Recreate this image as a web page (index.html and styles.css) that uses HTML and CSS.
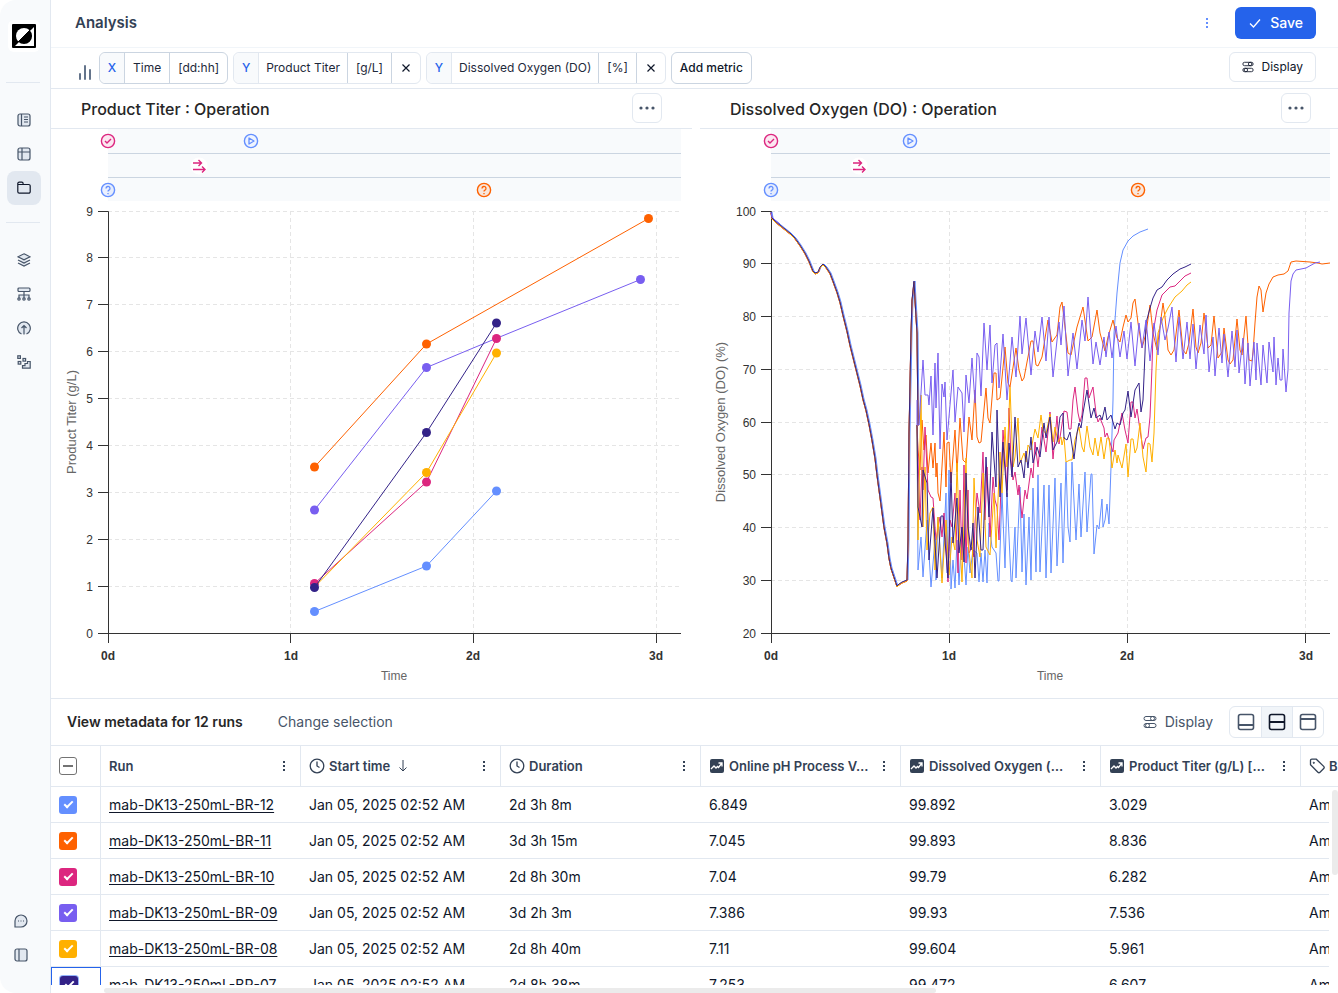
FILE: index.html
```html
<!DOCTYPE html>
<html lang="en">
<head>
  <meta charset="UTF-8">
  <meta name="viewport" content="width=device-width, initial-scale=1.0">
  <title>Analysis</title>
  <link rel="stylesheet" href="styles.css">
</head>
<body>
  <!-- Shared icons -->
  <svg class="sprite" aria-hidden="true">
    <symbol id="i-sliders" viewBox="0 0 14 14">
      <rect x="1" y="1.5" width="12" height="4" rx="2"/><circle cx="9.5" cy="3.5" r="2"/>
      <rect x="1" y="8.5" width="12" height="4" rx="2"/><circle cx="4.5" cy="10.5" r="2"/>
    </symbol>
    <symbol id="i-kebab" viewBox="0 0 4 12">
      <path d="M1 1h2v2H1zM1 5h2v2H1zM1 9h2v2H1z" fill="currentColor" stroke="none"/>
    </symbol>
    <symbol id="i-clock" viewBox="0 0 16 16">
      <circle cx="8" cy="8" r="6.800" stroke-width="1.300"/><path d="M8 3.500V8l2.500 1.500" stroke-width="1.300"/>
    </symbol>
    <symbol id="i-trend" viewBox="0 0 16 16">
      <rect x="1" y="1" width="14" height="14" rx="2" fill="currentColor" stroke="none"/>
      <path d="M2 11l3-3 2 2 1.500-1.500 1 1L13 5M9.500 5H13v3.500" stroke="#fff" stroke-width="1.300"/>
    </symbol>
    <symbol id="i-tag" viewBox="0 0 16 16">
      <path d="M1.500 2.500v4.300l7.400 7.400a1.500 1.500 0 0 0 2.100 0l3.700-3.700a1.500 1.500 0 0 0 0-2.100L7.300 1.200H2.800a1.300 1.300 0 0 0-1.300 1.300z" stroke-width="1.300"/>
      <circle cx="4.800" cy="4.800" r=".6" fill="currentColor"/>
    </symbol>
    <symbol id="e-check" viewBox="-9 -9 18 18">
      <circle r="6.600" fill="#fce7f1" stroke="#dc267f" stroke-width="1.400"/>
      <path d="M-3 0l2 2 4-4" fill="none" stroke="#dc267f" stroke-width="1.400"/>
    </symbol>
    <symbol id="e-play" viewBox="-9 -9 18 18">
      <circle r="6.600" fill="#eff4ff" stroke="#648fff" stroke-width="1.400"/>
      <path d="M-2-3v6l5-3z" fill="none" stroke="#648fff" stroke-width="1.300" stroke-linejoin="round"/>
    </symbol>
    <symbol id="e-arrows" viewBox="-9 -9 18 18">
      <circle r="8.500" fill="#fff" stroke="none"/>
      <path d="M-6-3h8M-.5-6l3 3-3 3M-6 3.500H6M3 .5l3 3-3 3" fill="none" stroke="#dc267f" stroke-width="1.400"/>
    </symbol>
    <symbol id="e-ask" viewBox="-9 -9 18 18">
      <circle r="6.600" fill="currentColor" fill-opacity=".12" stroke="currentColor" stroke-width="1.400"/>
      <path d="M-2-1.500a2 2 0 1 1 3 1.700q-1 .5-1 1.300M0 3v1.200" fill="none" stroke="currentColor" stroke-width="1.300"/>
    </symbol>
  </svg>

  <div class="app">
    <nav class="sidebar">
      <div class="logo">
        <svg width="24" height="24" viewBox="0 0 24 24">
          <rect width="24" height="24" rx="1"/>
          <path d="M22 3v19H3z" fill="#fff"/>
          <circle cx="12" cy="12" r="8" fill="#fff"/>
          <path d="M6.300 17.700A8 8 0 0 0 17.700 6.300z"/>
          <path d="M1 23L23 1" stroke="#000" stroke-width="1"/>
        </svg>
      </div>
      <hr>
      <div class="nav-group">
        <button aria-label="Notebook"><svg viewBox="0 0 14 14"><rect x="1" y="1" width="12" height="12" rx="2"/><path d="M4.500 1v12M7 4h4M7 6.500h4M7 9h4"/></svg></button>
        <button aria-label="Tables"><svg viewBox="0 0 14 14"><rect x="1" y="1" width="12" height="12" rx="2"/><path d="M5 1v12M1 5h12"/></svg></button>
        <button class="active" aria-label="Projects"><svg viewBox="0 0 14 14"><path d="M.8 4.500V2.500a1.300 1.300 0 0 1 1.300-1.300h2.700a1.300 1.300 0 0 1 1.300 1.300v1h5.600a1.500 1.500 0 0 1 1.500 1.500v5.700a1.500 1.500 0 0 1-1.500 1.500H2.300a1.500 1.500 0 0 1-1.500-1.500zM.8 3.500h5.500"/></svg></button>
      </div>
      <hr>
      <div class="nav-group">
        <button aria-label="Layers"><svg viewBox="0 0 14 14"><path d="M7 .8l6 3-6 3-6-3zM1 7l6 3 6-3M1 10l6 3 6-3"/></svg></button>
        <button aria-label="Hierarchy"><svg viewBox="0 0 14 14"><rect x="1" y="1" width="12" height="3.500" rx="1"/><path d="M7 4.500V11M2 11V8h10v3"/><circle cx="2" cy="12" r="1.200"/><circle cx="7" cy="12" r="1.200"/><circle cx="12" cy="12" r="1.200"/></svg></button>
        <button aria-label="Uploads"><svg viewBox="0 0 14 14"><path d="M4.500 13a6.300 6.300 0 1 1 5 0M7 13.500V4.500M4.500 7L7 4.500 9.500 7"/></svg></button>
        <button aria-label="Steps"><svg viewBox="0 0 14 14"><rect x=".8" y=".8" width="2.600" height="2.600"/><rect x="1.200" y="6.500" width="2.600" height="2.600"/><rect x="6" y="3.500" width="2.600" height="2.600"/><path d="M5.500 13.200v-2.500h2.500V8.500h2.500V6.500h2.700v6.700z"/></svg></button>
      </div>
      <div class="nav-group nav-bottom">
        <button aria-label="Chat"><svg viewBox="0 0 14 14"><path d="M1 13V7a6 6 0 1 1 6 6z"/><path d="M4 7h1M6.500 7h1M9 7h1"/></svg></button>
        <button aria-label="Toggle sidebar"><svg viewBox="0 0 14 14"><rect x="1" y="1" width="12" height="12" rx="2"/><path d="M5 1v12"/></svg></button>
      </div>
    </nav>

    <main class="main">
      <header class="topbar">
        <h1>Analysis</h1>
        <button class="kebab kebab-blue" aria-label="More"><svg><use href="#i-kebab"/></svg></button>
        <button class="save"><svg viewBox="0 0 14 14"><path d="M2 7.500l3.500 3.500L12 3.500"/></svg>Save</button>
      </header>

      <div class="toolbar">
        <svg class="bars" viewBox="0 0 16 18"><path d="M3 11v5M8 3v13M13 7v9"/></svg>
        <div class="chip chip-x">
          <span class="axis">X</span><button>Time</button><button>[dd:hh]</button>
        </div>
        <div class="chip">
          <span class="axis">Y</span><button>Product Titer</button><button class="unit">[g/L]</button><button class="remove" aria-label="Remove"><svg viewBox="0 0 8 8"><path d="M.5.5l7 7M7.500.5l-7 7"/></svg></button>
        </div>
        <div class="chip">
          <span class="axis">Y</span><button>Dissolved Oxygen (DO)</button><button class="unit">[%]</button><button class="remove" aria-label="Remove"><svg viewBox="0 0 8 8"><path d="M.5.5l7 7M7.500.5l-7 7"/></svg></button>
        </div>
        <button class="add">Add metric</button>
        <button class="display"><svg><use href="#i-sliders"/></svg>Display</button>
      </div>

      <div class="charts">
        <section class="chart">
          <header>
            <h2>Product Titer : Operation</h2>
            <button class="more" aria-label="Chart options"><svg viewBox="0 0 16 4"><circle cx="2" cy="2" r="1.600"/><circle cx="8" cy="2" r="1.600"/><circle cx="14" cy="2" r="1.600"/></svg></button>
          </header>
          <svg class="plot" viewBox="51 129 641 569">
            <rect class="lane" x="108" y="129" width="573" height="72"/>
            <path class="lane-line" d="M108 153.500H681M108 177.500H681"/>
            <path class="grid" d="M108 211.500H681M108 257.500H681M108 304.500H681M108 351.500H681M108 398.500H681M108 445.500H681M108 492.500H681M108 539.500H681M108 586.500H681M290.500 211V633M473.500 211V633M656.500 211V633"/>
            <path class="axis-line" d="M98 211.500H108.500V643M98 257.500h10M98 304.500h10M98 351.500h10M98 398.500h10M98 445.500h10M98 492.500h10M98 539.500h10M98 586.500h10M98 633.500H681M290.500 633v10M473.500 633v10M656.500 633v10"/>
            <g class="y-ticks">
              <text x="93" y="216">9</text><text x="93" y="262">8</text><text x="93" y="309">7</text><text x="93" y="356">6</text><text x="93" y="403">5</text><text x="93" y="450">4</text><text x="93" y="497">3</text><text x="93" y="544">2</text><text x="93" y="591">1</text><text x="93" y="638">0</text>
            </g>
            <g class="x-ticks">
              <text x="108" y="660">0d</text><text x="291" y="660">1d</text><text x="473" y="660">2d</text><text x="656" y="660">3d</text>
            </g>
            <text class="title" x="394" y="680">Time</text>
            <text class="title y-title" transform="translate(76 422) rotate(-90)">Product Titer (g/L)</text>

            <g class="series blue"><path d="M314.500 611.500L426.500 566 496.500 491"/><circle cx="314.500" cy="611.500" r="4.500"/><circle cx="426.500" cy="566" r="4.500"/><circle cx="496.500" cy="491" r="4.500"/></g>
            <g class="series orange"><path d="M314.500 467L426.500 344 648.500 218.500"/><circle cx="314.500" cy="467" r="4.500"/><circle cx="426.500" cy="344" r="4.500"/><circle cx="648.500" cy="218.500" r="4.500"/></g>
            <g class="series purple"><path d="M314.500 510L426.500 367.500 496 338.500 640.500 279.500"/><circle cx="314.500" cy="510" r="4.500"/><circle cx="426.500" cy="367.500" r="4.500"/><circle cx="640.500" cy="279.500" r="4.500"/></g>
            <g class="series pink"><path d="M314.500 583.500L426.500 482 496.500 338.500"/><circle cx="314.500" cy="583.500" r="4.500"/><circle cx="426.500" cy="482" r="4.500"/><circle cx="496.500" cy="338.500" r="4.500"/></g>
            <g class="series yellow"><path d="M314.500 587L426.500 472.500 496.500 353"/><circle cx="426.500" cy="472.500" r="4.500"/><circle cx="496.500" cy="353" r="4.500"/></g>
            <g class="series indigo"><path d="M314.500 587.500L426.500 432.500 496.500 323"/><circle cx="314.500" cy="587.500" r="4.500"/><circle cx="426.500" cy="432.500" r="4.500"/><circle cx="496.500" cy="323" r="4.500"/></g>

            <use href="#e-check" x="99" y="132" width="18" height="18"/>
            <use href="#e-play" x="242" y="132" width="18" height="18"/>
            <use href="#e-arrows" x="190" y="157" width="18" height="18"/>
            <use class="ask-blue" href="#e-ask" x="99" y="181" width="18" height="18"/>
            <use class="ask-orange" href="#e-ask" x="475" y="181" width="18" height="18"/>
          </svg>
        </section>

        <section class="chart">
          <header>
            <h2>Dissolved Oxygen (DO) : Operation</h2>
            <button class="more" aria-label="Chart options"><svg viewBox="0 0 16 4"><circle cx="2" cy="2" r="1.600"/><circle cx="8" cy="2" r="1.600"/><circle cx="14" cy="2" r="1.600"/></svg></button>
          </header>
          <svg class="plot" viewBox="700 129 641 569">
            <rect class="lane" x="771" y="129" width="559" height="72"/>
            <path class="lane-line" d="M771 153.500H1330M771 177.500H1330"/>
            <path class="grid" d="M771 211.500H1330M771 263.500H1330M771 316.500H1330M771 369.500H1330M771 422.500H1330M771 474.500H1330M771 527.500H1330M771 580.500H1330M949.500 211V633M1127.500 211V633M1305.500 211V633"/>
            <path class="axis-line" d="M761 211.500H771.500V643M761 263.500h10M761 316.500h10M761 369.500h10M761 422.500h10M761 474.500h10M761 527.500h10M761 580.500h10M761 633.500H1330M949.500 633v10M1127.500 633v10M1305.500 633v10"/>
            <g class="y-ticks">
              <text x="756" y="216">100</text><text x="756" y="268">90</text><text x="756" y="321">80</text><text x="756" y="374">70</text><text x="756" y="427">60</text><text x="756" y="479">50</text><text x="756" y="532">40</text><text x="756" y="585">30</text><text x="756" y="638">20</text>
            </g>
            <g class="x-ticks">
              <text x="771" y="660">0d</text><text x="949" y="660">1d</text><text x="1127" y="660">2d</text><text x="1306" y="660">3d</text>
            </g>
            <text class="title" x="1050" y="680">Time</text>
            <text class="title y-title" transform="translate(725 422) rotate(-90)">Dissolved Oxygen (DO) (%)</text>

            <!-- All runs share the first part of the curve -->
            <defs>
              <path id="descent" d="M771 212L772 218 775 221 780 225 785 229 790 233 795 238 800 245 805 253 809 261 813 271 815 273 818 272 820 267 823 264 826 267 830 273 833 281 837 292 840 302 843 315 847 331 850 345 853 357 856 369 860 385 863 399 866 410 869 424 872 440 875 458 877 475 880 497 882 512 884 527 887 543 889 558 891 568 894 577 897 586 899 584 902 582 907 580 908 540 909 433 911 333 912 300 914 281 915 300 917 333 918 425"/>
            </defs>
            <g class="series blue">
              <use href="#descent" x="1"/>
              <path d="M917 425L918 570 921 537 923 577 927 520 931 587 935 540 936 580 938 517 942 578 946 493 947 573 949 470 951 589 953 560 955 588 957 540 959 585 962 527 966 585 968 547 970 573 973 550 977 553 979 582 981 553 983 582 985 550 987 583 989 523 992 547 996 553 998 581 999 581 1002 493 1005 568 1007 493 1011 580 1012 582 1015 527 1016 578 1020 487 1022 572 1024 514 1026 585 1029 517 1031 580 1033 488 1036 572 1038 475 1040 572 1044 485 1046 578 1049 485 1051 573 1055 478 1057 566 1061 483 1063 563 1066 462 1068 527 1070 542 1072 462 1076 540 1079 484 1081 537 1085 472 1087 532 1091 474 1092 474 1094 554 1097 525 1099 529 1102 499 1103 527 1105 520 1107 504 1109 524 1111 467 1113 400 1114 333 1117 293 1120 263 1123 250 1128 241 1133 236 1140 232 1148 229"/>
            </g>
            <g class="series orange">
              <use href="#descent" y="1"/>
              <path d="M917 425L918 450 920 470 922 420 924 450 926 435 928 473 931 443 933 468 935 443 936 477 937 463 938 493 940 501 944 432 946 487 947 443 949 442 951 483 955 430 957 472 960 418 963 460 966 463 969 417 972 440 975 390 977 437 979 443 981 442 986 388 988 418 990 423 994 373 996 373 997 400 1000 398 1005 347 1008 383 1010 387 1016 348 1019 370 1022 381 1024 378 1031 341 1033 341 1036 365 1038 366 1042 357 1048 320 1052 342 1057 335 1060 307 1062 302 1065 327 1068 353 1071 355 1077 327 1083 307 1088 341 1092 337 1097 310 1100 333 1105 351 1108 337 1113 320 1117 338 1120 342 1123 327 1126 315 1128 322 1131 318 1133 303 1135 299 1138 323 1142 348 1146 333 1150 305 1153 333 1157 350 1163 303 1165 317 1168 350 1171 355 1174 350 1179 310 1183 350 1186 354 1189 343 1193 309 1196 347 1198 353 1201 343 1204 313 1208 348 1211 345 1214 316 1218 358 1222 352 1224 328 1228 360 1230 364 1233 360 1237 319 1240 350 1242 355 1246 316 1249 360 1252 361 1253 352 1255 323 1257 297 1259 286 1261 290 1263 312 1266 293 1269 284 1273 277 1278 275 1284 274 1288 271 1291 262 1296 261 1310 262 1318 263 1322 264 1330 263"/>
            </g>
            <g class="series pink">
              <use href="#descent" y="1"/>
              <path d="M917 425L920 520 922 467 923 490 925 427 928 490 931 497 933 498 935 527 936 540 940 517 942 537 944 513 946 547 948 582 950 520 952 527 955 493 957 547 958 573 960 490 962 560 964 465 966 563 968 490 969 553 972 547 974 557 975 523 977 493 980 513 983 452 985 520 987 467 990 537 993 477 995 500 997 507 999 540 1001 487 1003 430 1005 460 1007 490 1009 408 1011 460 1013 480 1015 472 1018 495 1019 485 1022 518 1025 490 1027 499 1031 468 1033 478 1035 442 1038 467 1042 427 1046 452 1050 412 1053 459 1057 416 1059 444 1064 411 1067 412 1069 429 1071 429 1073 400 1075 387 1078 413 1080 422 1082 415 1085 378 1087 378 1089 398 1093 387 1096 413 1098 422 1100 418 1104 428 1105 437 1107 433 1113 452 1114 440 1118 433 1122 413 1125 430 1128 443 1131 402 1133 402 1135 418 1137 409 1140 430 1143 449 1146 438 1148 437 1150 417 1152 367 1153 333 1157 310 1162 295 1170 287 1175 286 1180 281 1185 276 1191 273"/>
            </g>
            <g class="series yellow">
              <use href="#descent" y="1"/>
              <path d="M917 425L918 540 921 395 923 527 925 467 927 550 930 513 933 507 935 570 938 517 942 583 946 520 949 575 952 537 955 550 957 463 959 523 962 582 966 458 968 543 972 578 974 478 977 540 980 557 983 473 986 547 990 555 994 493 996 548 1000 452 1002 493 1005 427 1007 467 1010 387 1013 467 1015 457 1018 418 1020 463 1024 453 1026 462 1028 445 1031 450 1035 429 1038 438 1041 415 1043 430 1046 434 1050 414 1053 442 1055 427 1058 442 1061 437 1062 445 1064 437 1066 462 1070 460 1072 460 1075 440 1079 427 1082 447 1084 452 1087 426 1090 447 1093 455 1095 438 1098 456 1101 437 1104 459 1107 438 1109 438 1112 468 1115 450 1117 463 1118 455 1122 468 1126 444 1128 477 1131 439 1133 439 1135 453 1137 448 1140 423 1143 457 1146 472 1148 443 1150 444 1152 462 1154 433 1156 370 1158 333 1163 318 1168 308 1175 297 1182 291 1187 285 1191 282"/>
            </g>
            <g class="series indigo">
              <use href="#descent"/>
              <path d="M917 425L918 507 922 527 923 470 927 483 929 560 933 508 937 578 941 516 943 516 948 578 951 472 953 543 957 498 959 553 962 527 964 562 966 473 968 527 971 550 973 523 975 578 978 507 981 550 983 550 986 457 989 517 992 432 996 487 997 410 1000 497 1003 442 1007 497 1009 443 1012 477 1015 417 1018 467 1021 460 1024 478 1026 451 1028 468 1031 437 1033 463 1037 447 1040 457 1044 423 1046 438 1050 417 1053 450 1057 442 1060 417 1063 413 1064 438 1067 440 1070 432 1074 459 1077 433 1079 423 1081 428 1083 413 1087 390 1091 418 1094 408 1096 418 1100 415 1102 420 1105 407 1107 420 1111 415 1115 429 1117 423 1120 425 1123 413 1125 410 1128 391 1131 417 1135 390 1139 383 1141 412 1143 400 1145 353 1146 323 1150 308 1153 298 1157 290 1162 287 1167 280 1173 274 1180 269 1185 267 1191 264"/>
            </g>
            <g class="series purple">
              <path d="M771 212L772 217 775 220 780 224M917 400L917 425 919 425 923 360 925 395 928 395 929 405 931 376 933 435 935 363 936 408 938 353 940 449 942 384 944 397 945 382 947 440 953 370 955 422 958 387 962 393 964 432 966 375 969 403 972 358 975 403 977 353 979 357 981 396 984 323 987 370 990 325 992 383 995 345 997 343 999 388 1003 334 1007 400 1012 337 1016 377 1020 316 1022 354 1026 318 1031 375 1035 331 1038 352 1042 317 1046 361 1049 317 1053 377 1059 322 1061 345 1064 306 1068 376 1073 333 1077 369 1082 320 1085 341 1088 297 1093 364 1096 342 1100 365 1104 337 1106 357 1109 332 1112 358 1116 326 1120 357 1124 331 1127 359 1131 322 1135 366 1139 323 1142 348 1146 320 1150 361 1154 323 1158 355 1161 317 1165 340 1168 328 1172 307 1176 362 1179 317 1183 359 1187 322 1190 359 1193 324 1196 369 1200 325 1204 354 1206 315 1209 372 1213 337 1215 376 1219 328 1222 363 1224 334 1228 377 1232 331 1235 367 1237 330 1239 373 1243 338 1245 384 1248 343 1250 386 1254 342 1256 380 1257 343 1261 385 1263 345 1267 383 1269 342 1273 372 1274 337 1276 385 1278 358 1280 380 1282 380 1283 349 1286 392 1288 370 1289 313 1291 281 1293 274 1296 270 1306 268 1315 263 1320 262"/>
            </g>

            <use href="#e-check" x="762" y="132" width="18" height="18"/>
            <use href="#e-play" x="901" y="132" width="18" height="18"/>
            <use href="#e-arrows" x="850" y="157" width="18" height="18"/>
            <use class="ask-blue" href="#e-ask" x="762" y="181" width="18" height="18"/>
            <use class="ask-orange" href="#e-ask" x="1129" y="181" width="18" height="18"/>
          </svg>
        </section>
      </div>

      <section class="runs">
        <div class="runs-bar">
          <h3>View metadata for 12 runs</h3>
          <button class="plain">Change selection</button>
          <button class="plain display-runs"><svg><use href="#i-sliders"/></svg>Display</button>
          <div class="layouts">
            <button aria-label="Table bottom"><svg viewBox="0 0 18 18"><rect x="1.500" y="1.500" width="15" height="15" rx="2"/><path d="M1.500 12h15"/></svg></button>
            <button class="on" aria-label="Split"><svg viewBox="0 0 18 18"><rect x="1.500" y="1.500" width="15" height="15" rx="2"/><path d="M1.500 9h15"/></svg></button>
            <button aria-label="Table top"><svg viewBox="0 0 18 18"><rect x="1.500" y="1.500" width="15" height="15" rx="2"/><path d="M1.500 6h15"/></svg></button>
          </div>
        </div>

        <div class="table-wrap">
          <table>
            <thead>
              <tr>
                <th class="pick"><input type="checkbox" class="some" aria-label="Select all runs"></th>
                <th><div class="head">Run<button class="kebab" aria-label="Run menu"><svg><use href="#i-kebab"/></svg></button></div></th>
                <th><div class="head"><svg class="icon"><use href="#i-clock"/></svg>Start time<svg class="sort" viewBox="0 0 10 14"><path d="M5 1v11M1.500 8.500L5 12l3.500-3.500"/></svg><button class="kebab" aria-label="Start time menu"><svg><use href="#i-kebab"/></svg></button></div></th>
                <th><div class="head"><svg class="icon"><use href="#i-clock"/></svg>Duration<button class="kebab" aria-label="Duration menu"><svg><use href="#i-kebab"/></svg></button></div></th>
                <th><div class="head"><svg class="icon"><use href="#i-trend"/></svg>Online pH Process V…<button class="kebab" aria-label="pH menu"><svg><use href="#i-kebab"/></svg></button></div></th>
                <th><div class="head"><svg class="icon"><use href="#i-trend"/></svg>Dissolved Oxygen (…<button class="kebab" aria-label="Oxygen menu"><svg><use href="#i-kebab"/></svg></button></div></th>
                <th><div class="head"><svg class="icon"><use href="#i-trend"/></svg>Product Titer (g/L) […<button class="kebab" aria-label="Titer menu"><svg><use href="#i-kebab"/></svg></button></div></th>
                <th><div class="head"><svg class="icon"><use href="#i-tag"/></svg>B</div></th>
              </tr>
            </thead>
            <tbody>
              <tr><td class="pick"><input type="checkbox" class="blue" aria-label="BR-12" checked></td><td><a href="#">mab-DK13-250mL-BR-12</a></td><td>Jan 05, 2025 02:52 AM</td><td>2d 3h 8m</td><td>6.849</td><td>99.892</td><td>3.029</td><td>Am</td></tr>
              <tr><td class="pick"><input type="checkbox" class="orange" aria-label="BR-11" checked></td><td><a href="#">mab-DK13-250mL-BR-11</a></td><td>Jan 05, 2025 02:52 AM</td><td>3d 3h 15m</td><td>7.045</td><td>99.893</td><td>8.836</td><td>Am</td></tr>
              <tr><td class="pick"><input type="checkbox" class="pink" aria-label="BR-10" checked></td><td><a href="#">mab-DK13-250mL-BR-10</a></td><td>Jan 05, 2025 02:52 AM</td><td>2d 8h 30m</td><td>7.04</td><td>99.79</td><td>6.282</td><td>Am</td></tr>
              <tr><td class="pick"><input type="checkbox" class="purple" aria-label="BR-09" checked></td><td><a href="#">mab-DK13-250mL-BR-09</a></td><td>Jan 05, 2025 02:52 AM</td><td>3d 2h 3m</td><td>7.386</td><td>99.93</td><td>7.536</td><td>Am</td></tr>
              <tr><td class="pick"><input type="checkbox" class="yellow" aria-label="BR-08" checked></td><td><a href="#">mab-DK13-250mL-BR-08</a></td><td>Jan 05, 2025 02:52 AM</td><td>2d 8h 40m</td><td>7.11</td><td>99.604</td><td>5.961</td><td>Am</td></tr>
              <tr class="focused"><td class="pick"><input type="checkbox" class="indigo" aria-label="BR-07" checked></td><td><a href="#">mab-DK13-250mL-BR-07</a></td><td>Jan 05, 2025 02:52 AM</td><td>2d 8h 38m</td><td>7.253</td><td>99.472</td><td>6.607</td><td>Am</td></tr>
            </tbody>
          </table>
          <div class="vbar"><span></span></div>
          <div class="hbar"><span></span></div>
        </div>
      </section>
    </main>
  </div>
</body>
</html>
```
FILE: styles.css
```css
* {
  box-sizing: border-box;
}

body {
  margin: 0;
  font-family: Inter, "Liberation Sans", sans-serif;
  font-size: 14px;
  color: #0f172a;
  background: #fff;
}

button {
  font: inherit;
  color: inherit;
  background: none;
  border: none;
  padding: 0;
  cursor: pointer;
}

svg {
  fill: none;
  stroke: currentColor;
  flex: none;
}

h1, h2, h3 {
  margin: 0;
}

.sprite {
  display: none;
}

.app {
  display: flex;
  height: 100vh;
  overflow: hidden;
}

/* Sidebar */
.sidebar {
  width: 51px;
  flex: none;
  display: flex;
  flex-direction: column;
  padding: 20px 0 21px;
  background: #f8fafc;
  border-right: 1px solid #e2e8f0;
  border-radius: 16px 0 0 16px;
  color: #475569;
}

.logo {
  width: 32px;
  height: 32px;
  margin-left: 8px;
  padding: 4px;
  background: #fff;
  border-radius: 6px;
}

.logo svg {
  display: block;
  fill: #000;
  stroke: none;
}

.sidebar hr {
  width: 34px;
  height: 1px;
  margin: 30px 0 20px 6px;
  border: none;
  background: #e2e8f0;
}

.nav-group {
  display: flex;
  flex-direction: column;
  padding-left: 7px;
}

.nav-group + hr {
  margin-top: 17px;
}

.nav-group button {
  width: 34px;
  height: 34px;
  display: flex;
  align-items: center;
  justify-content: center;
  border-radius: 8px;
}

.nav-group svg {
  width: 14px;
  height: 14px;
  fill: #e2e8f0;
  stroke-width: 1.2;
}

.nav-group .active {
  background: #e2e8f0;
  color: #0f172a;
}

.nav-bottom {
  margin-top: auto;
  padding-left: 4px;
}

/* Top bars */
.main {
  flex: 1;
  min-width: 0;
  display: flex;
  flex-direction: column;
  overflow: hidden;
}

.topbar {
  display: flex;
  align-items: center;
  height: 48px;
  flex: none;
  padding: 0 22px 2px 24px;
  border-bottom: 1px solid #f1f5f9;
}

h1 {
  font-size: 15px;
  line-height: 20px;
  font-weight: 600;
  color: #334155;
  margin-right: auto;
}

.kebab {
  display: flex;
  justify-content: center;
  width: 16px;
  color: #334155;
}

.kebab svg {
  width: 4px;
  height: 12px;
}

.kebab-blue {
  color: #648fff;
  margin-right: 20px;
}

.save {
  display: flex;
  align-items: center;
  gap: 8px;
  height: 32px;
  padding: 0 13px;
  border-radius: 6px;
  background: #2563eb;
  color: #fff;
  font-weight: 500;
}

.save svg {
  width: 14px;
  height: 14px;
  stroke-width: 1.3;
}

.toolbar {
  display: flex;
  align-items: center;
  gap: 5px;
  height: 41px;
  flex: none;
  padding: 0 22px 0 26px;
  border-bottom: 1px solid #e2e8f0;
  font-size: 12px;
  line-height: 16px;
}

.bars {
  width: 16px;
  height: 18px;
  margin: 8px 1px 0 0;
  color: #64748b;
  stroke-width: 2;
  stroke-linecap: round;
}

.chip {
  display: flex;
  height: 32px;
  border: 1px solid #e2e8f0;
  border-radius: 6px;
  color: #1e293b;
}

.chip-x {
  border-color: #cbd5e1;
}

.chip button {
  padding: 0 7px 1px;
  border-left: 1px solid #e2e8f0;
}

.chip-x button {
  padding: 0 8px 1px;
  border-left-color: #cbd5e1;
}

.chip .axis {
  width: 24px;
  line-height: 29px;
  text-align: center;
  font-weight: 500;
  color: #2563eb;
  background: #f8fafc;
  border-radius: 6px 0 0 6px;
}

.chip .unit {
  padding: 0 8px 1px;
  border-left: 1px solid #cbd5e1;
  border-right: 1px solid #cbd5e1;
}

.chip .remove {
  width: 28px;
  padding: 0;
  border: none;
  color: #0f172a;
}

.remove svg {
  width: 8px;
  height: 8px;
  stroke-width: 1.2;
}

.add {
  height: 32px;
  padding: 0 8px 1px;
  border: 1px solid #cbd5e1;
  border-radius: 6px;
  font-weight: 500;
}

.display {
  display: flex;
  align-items: center;
  gap: 8px;
  height: 30px;
  margin: 0 0 2px auto;
  padding: 0 12px 1px;
  border: 1px solid #e2e8f0;
  border-radius: 6px;
}

.display svg {
  width: 12px;
  height: 12px;
}

/* Charts */
.charts {
  display: grid;
  grid-template-columns: 1fr 1fr;
  gap: 8px;
  margin-right: -3px;
  flex: none;
}

.chart {
  min-width: 0;
}

.chart header {
  display: flex;
  align-items: center;
  justify-content: space-between;
  height: 40px;
  padding: 0 30px;
  border-bottom: 1px solid #e2e8f0;
}

h2 {
  font-size: 16px;
  font-weight: 500;
  color: #262626;
}

.more {
  width: 30px;
  height: 30px;
  margin-bottom: 1px;
  border: 1px solid #e2e8f0;
  border-radius: 6px;
  color: #475569;
}

.more svg {
  width: 16px;
  height: 4px;
  display: block;
  margin: 0 auto;
  fill: currentColor;
  stroke: none;
}

.plot {
  display: block;
  width: 100%;
  font-family: "Liberation Sans", Arial, sans-serif;
  font-size: 12px;
}

.lane {
  fill: #f8fafc;
  stroke: none;
}

.lane-line {
  stroke: #cbd5e1;
}

.grid {
  stroke: #e5e5e5;
  stroke-dasharray: 4 3;
}

.axis-line {
  stroke: #333;
}

.plot text {
  fill: #333;
  stroke: none;
}

.y-ticks {
  text-anchor: end;
}

.x-ticks {
  text-anchor: middle;
  font-weight: 700;
}

.plot .title {
  fill: #666;
  text-anchor: middle;
}

.y-title {
  font-size: 13px;
}

.series circle {
  fill: var(--run);
  stroke: none;
}

.series {
  stroke: var(--run);
}

.ask-blue {
  color: #648fff;
}

.ask-orange {
  color: #fe6100;
}

/* Run colours */
.blue { --run: #648fff; }
.orange { --run: #fe6100; }
.pink { --run: #dc267f; }
.purple { --run: #785ef0; }
.yellow { --run: #ffb000; }
.indigo { --run: #332288; }

/* Runs table */
.runs {
  flex: 1;
  min-height: 200px;
  display: flex;
  flex-direction: column;
  border-top: 1px solid #e2e8f0;
}

.runs-bar {
  display: flex;
  align-items: center;
  height: 47px;
  flex: none;
  padding: 0 14px 0 16px;
  border-bottom: 1px solid #e2e8f0;
  line-height: 20px;
}

h3 {
  font-size: 14px;
  font-weight: 600;
  color: #262626;
  margin-right: 35px;
}

.plain {
  display: flex;
  align-items: center;
  gap: 8px;
  color: #475569;
}

.display-runs {
  margin-left: auto;
}

.plain svg {
  width: 14px;
  height: 14px;
}

.layouts {
  display: flex;
  height: 32px;
  margin-left: 16px;
  border: 1px solid #e2e8f0;
  border-radius: 6px;
  overflow: hidden;
  color: #475569;
}

.layouts button {
  display: flex;
  align-items: center;
  justify-content: center;
  width: 31px;
}

.layouts button + button {
  border-left: 1px solid #e2e8f0;
}

.layouts svg {
  width: 18px;
  height: 18px;
  stroke-width: 1.6;
}

.layouts path {
  stroke-width: 2;
}

.layouts .on {
  background: #f1f5f9;
  color: #0f172a;
}

.table-wrap {
  position: relative;
  flex: 1;
  overflow: hidden;
}

table {
  width: 1450px;
  table-layout: fixed;
  border-spacing: 0;
}

th, td {
  padding: 0 8px;
  border-bottom: 1px solid #e2e8f0;
  text-align: left;
  white-space: nowrap;
}

th {
  height: 41px;
  border-right: 1px solid #e2e8f0;
  font-size: 13px;
  font-weight: 600;
  line-height: 20px;
  color: #334155;
}

td {
  height: 36px;
}

.pick {
  width: 50px;
  border-right: 1px solid #e2e8f0;
}

.head {
  display: flex;
  align-items: center;
}

.head .icon {
  width: 16px;
  height: 16px;
  margin-right: 4px;
}

.head .sort {
  width: 10px;
  height: 14px;
  margin-left: 8px;
}

.head .kebab {
  margin-left: auto;
}

td a {
  color: inherit;
  text-underline-offset: 2px;
}

input[type="checkbox"] {
  appearance: none;
  display: flex;
  align-items: center;
  justify-content: center;
  width: 18px;
  height: 18px;
  margin: 0;
  border-radius: 3px;
  background: var(--run);
}

input[type="checkbox"]:checked::after {
  content: "";
  width: 7px;
  height: 3px;
  margin-bottom: 3px;
  border: solid #fff;
  border-width: 0 0 2px 2px;
  transform: rotate(-45deg);
}

input.some {
  border: 1px solid #737373;
}

input.some::after {
  content: "";
  width: 10px;
  height: 2px;
  background: #737373;
}

.focused .pick {
  border: 1px solid #2563eb;
}

.focused input {
  box-shadow: 0 0 0 1px #93b4fb;
}

/* Scrollbars over the table body */
.vbar {
  position: absolute;
  top: 41px;
  right: 0;
  bottom: 0;
  width: 9px;
  padding: 3px 0 0 3px;
  background: #fff;
}

.vbar span {
  display: block;
  height: 85px;
  border-radius: 3px;
  background: #ebebeb;
}

.hbar {
  position: absolute;
  left: 0;
  right: 0;
  bottom: 0;
  height: 8px;
  padding: 3px 0 0 53px;
  background: #fff;
}

.hbar span {
  display: block;
  width: 67.4%;
  height: 5px;
  border-radius: 3px;
  background: #ebebeb;
}
```
